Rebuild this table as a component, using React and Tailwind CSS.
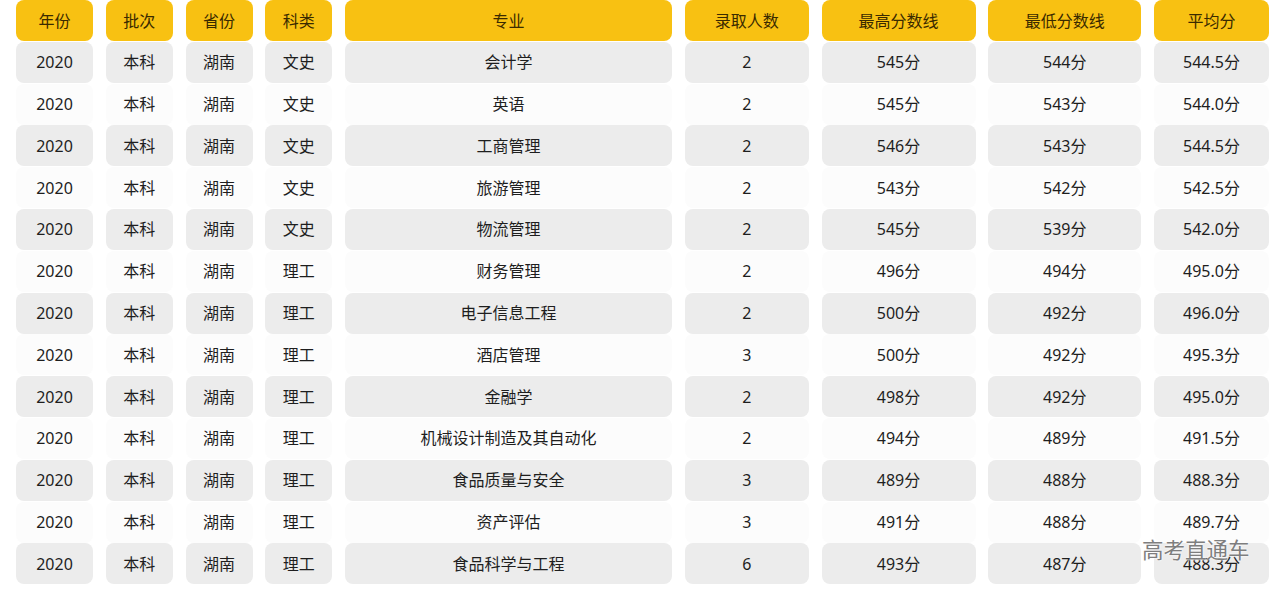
import React from 'react';

const headers = ['年份', '批次', '省份', '科类', '专业', '录取人数', '最高分数线', '最低分数线', '平均分'];

const rows = [
  ['文史', '会计学', 2, 545, 544, '544.5'],
  ['文史', '英语', 2, 545, 543, '544.0'],
  ['文史', '工商管理', 2, 546, 543, '544.5'],
  ['文史', '旅游管理', 2, 543, 542, '542.5'],
  ['文史', '物流管理', 2, 545, 539, '542.0'],
  ['理工', '财务管理', 2, 496, 494, '495.0'],
  ['理工', '电子信息工程', 2, 500, 492, '496.0'],
  ['理工', '酒店管理', 3, 500, 492, '495.3'],
  ['理工', '金融学', 2, 498, 492, '495.0'],
  ['理工', '机械设计制造及其自动化', 2, 494, 489, '491.5'],
  ['理工', '食品质量与安全', 3, 489, 488, '488.3'],
  ['理工', '资产评估', 3, 491, 488, '489.7'],
  ['理工', '食品科学与工程', 6, 493, 487, '488.3'],
];

export default function App() {
  return (
    <div
      className="relative w-[1280px] h-[591px] bg-white overflow-hidden text-[16px] text-[#1e1e1e]"
      style={{ fontFamily: '"Noto Sans", "Noto Sans CJK SC", sans-serif' }}
    >
      <div className="grid grid-cols-[77px_67px_67px_67px_327px_124px_154px_153px_115px] gap-x-[12.75px] gap-y-[0.8px] pl-[16px]">
        {headers.map((h) => (
          <div key={h} className="h-[41px] flex items-center justify-center rounded-[8px] bg-[#f8c112] text-[#3a2a00]">
            {h}
          </div>
        ))}
        {rows.map((r, i) => {
          const bg = i % 2 === 0 ? 'bg-[#ececec]' : 'bg-[#fcfcfc]';
          const cells = ['2020', '本科', '湖南', r[0], r[1], r[2], r[3] + '分', r[4] + '分', r[5] + '分'];
          return cells.map((c, j) => (
            <div key={i + '-' + j} className={`h-[41px] flex items-center justify-center rounded-[8px] ${bg}`}>
              {c}
            </div>
          ));
        })}
      </div>
      <div
        className="absolute left-[1142px] top-[535px] text-[21.5px] leading-[30px] text-[#7e7e7e]"
        style={{ textShadow: '0 0 2px #fff, 0 0 2px #fff' }}
      >
        高考直通车
      </div>
    </div>
  );
}
